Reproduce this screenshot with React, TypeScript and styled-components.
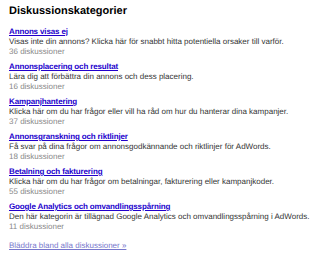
import React from "react"
import styled, { createGlobalStyle } from "styled-components"

const GlobalStyle = createGlobalStyle`
    body {
        margin: 0;
        background: #fff;
        font-family: "Liberation Sans", Arial, sans-serif;
        text-rendering: geometricPrecision;
    }
`

type Category = {
    title: string
    description: string
    count: number
}

const categories: Category[] = [
    { title: "Annons visas ej", description: "Visas inte din annons? Klicka här för snabbt hitta potentiella orsaker till varför.", count: 36 },
    { title: "Annonsplacering och resultat", description: "Lära dig att förbättra din annons och dess placering.", count: 16 },
    { title: "Kampanjhantering", description: "Klicka här om du har frågor eller vill ha råd om hur du hanterar dina kampanjer.", count: 37 },
    { title: "Annonsgranskning och riktlinjer", description: "Få svar på dina frågor om annonsgodkännande och riktlinjer för AdWords.", count: 18 },
    { title: "Betalning och fakturering", description: "Klicka här om du har frågor om betalningar, fakturering eller kampanjkoder.", count: 55 },
    { title: "Google Analytics och omvandlingsspårning", description: "Den här kategorin är tillägnad Google Analytics och omvandlingsspårning i AdWords.", count: 11 },
]

export default function App() {
    return (
        <>
            <GlobalStyle />
            <Panel>
                <Heading>Diskussionskategorier</Heading>
                <List>
                    {categories.map(c => (
                        <Item key={c.title}>
                            <Title href="#">{c.title}</Title>
                            <Description>{c.description}</Description>
                            <Count>{c.count} diskussioner</Count>
                        </Item>
                    ))}
                </List>
                <BrowseAll href="#">Bläddra bland alla diskussioner »</BrowseAll>
            </Panel>
        </>
    )
}

const Panel = styled.div`
    display: flex;
    flex-direction: column;
    align-items: flex-start;
    padding: 5px 9px 0;
`

const Heading = styled.h2`
    margin: 0 0 9px;
    font-size: 11px;
    line-height: 13px;
    font-weight: bold;
    color: #000;
`

const List = styled.div`
    display: flex;
    flex-direction: column;
    gap: 5px;
`

const Item = styled.div`
    display: flex;
    flex-direction: column;
    align-items: flex-start;
    font-size: 8px;
    line-height: 10px;
`

const Title = styled.a`
    font-weight: bold;
    letter-spacing: -0.14px;
    color: #2200cc;
    text-decoration: underline;
`

const Description = styled.div`
    color: #333;
`

const Count = styled.div`
    color: #888;
`

const BrowseAll = styled.a`
    margin-top: 9px;
    font-size: 8px;
    line-height: 10px;
    color: #7777cc;
    text-decoration: underline;
`
